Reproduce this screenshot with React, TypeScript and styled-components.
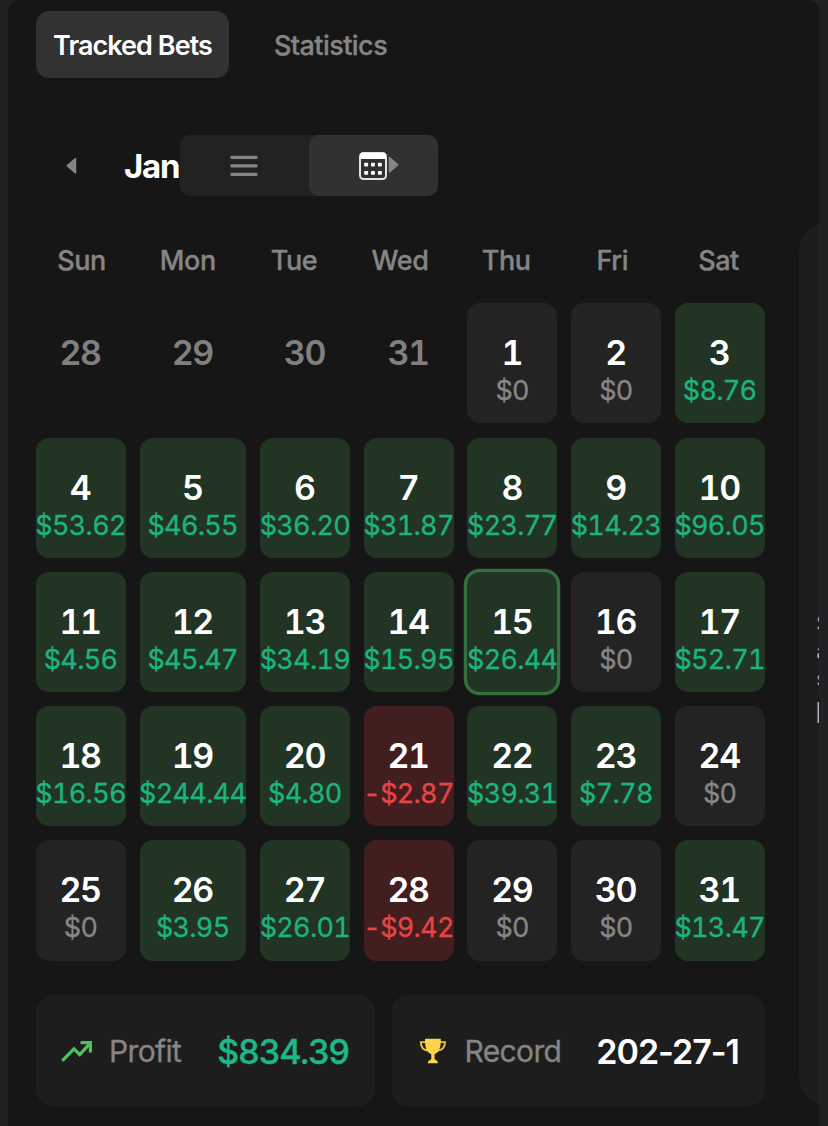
import React from "react";
import styled, { createGlobalStyle } from "styled-components";

const GlobalStyle = createGlobalStyle`
  * { box-sizing: border-box; }
  html, body { margin: 0; background: #212123; }
  body { font-family: Inter, "Liberation Sans", sans-serif; }
  button { font: inherit; border: 0; padding: 0; background: none; color: inherit; }
`;

const Page = styled.div`
  width: 828px;
  height: 1126px;
  padding: 0 9px 0 8px;
  background: #212123;
  overflow: hidden;
`;

const Panel = styled.main`
  height: 1126px;
  padding: 11px 0 0 28px;
  background: #161616;
  border-radius: 12px 10px 0 0;
  overflow: hidden;
  display: flex;
  gap: 34px;
`;

const Main = styled.div`
  flex: 0 0 729px;
  display: flex;
  flex-direction: column;
`;

const Tabs = styled.nav`
  display: flex;
  height: 67px;
  gap: 27.5px;
`;

const Tab = styled.button<{ $active?: boolean; $width: number }>`
  width: ${(p) => p.$width}px;
  height: 67px;
  padding-top: 2px;
  border-radius: 13px;
  font-size: 27px;
  font-weight: ${(p) => (p.$active ? 600 : 500)};
  letter-spacing: ${(p) => (p.$active ? -0.95 : -0.55)}px;
  -webkit-text-stroke: ${(p) => (p.$active ? 0 : 0.35)}px currentColor;
  white-space: nowrap;
  color: ${(p) => (p.$active ? "#ffffff" : "#858585")};
  background: ${(p) => (p.$active ? "#323232" : "transparent")};
`;

const Toolbar = styled.div`
  display: flex;
  align-items: center;
  height: 61px;
  margin-top: 57px;
`;

const PrevButton = styled.button`
  width: 71px;
  height: 61px;
  display: flex;
  align-items: center;
  justify-content: center;
`;

const MonthName = styled.h2`
  width: 72.5px;
  margin: 0;
  padding: 1px 0 0 17px;
  font-size: 33px;
  line-height: 40px;
  font-weight: 700;
  letter-spacing: -1.2px;
  color: #fff;
`;

const ViewToggle = styled.div`
  position: relative;
  width: 258px;
  height: 61px;
  display: flex;
  border-radius: 10px;
  background: #222222;
`;

const ToggleButton = styled.button<{ $active?: boolean }>`
  flex: 1;
  border-radius: 10px;
  display: flex;
  align-items: center;
  justify-content: center;
  background: ${(p) => (p.$active ? "#313131" : "transparent")};
`;

const NextButton = styled.button`
  position: absolute;
  right: 38.5px;
  top: 21px;
  width: 12px;
  height: 18px;
  display: flex;
`;

const Weekdays = styled.div`
  display: grid;
  grid-template-columns: repeat(7, 1fr);
  column-gap: 14px;
  margin: 48px 0 0;
`;

const Weekday = styled.span`
  height: 34px;
  line-height: 34px;
  padding-right: 0.9px;
  text-align: center;
  font-size: 27px;
  font-weight: 500;
  letter-spacing: -0.45px;
  -webkit-text-stroke: 0.35px currentColor;
  color: #858585;
`;

const Calendar = styled.div`
  display: grid;
  grid-template-columns: 89.9px 106.8px repeat(5, 89.9px);
  grid-auto-rows: 120.2px;
  column-gap: 13.8px;
  row-gap: 14.1px;
  margin-top: 25.3px;
  margin-left: -0.2px;
`;

type Tone = "win" | "loss" | "zero" | "outside";

const cellColor: Record<Tone, string> = {
  win: "#223524",
  loss: "#431e1f",
  zero: "#232323",
  outside: "transparent",
};

const amountColor: Record<Tone, string> = {
  win: "#1db37e",
  loss: "#e84347",
  zero: "#868686",
  outside: "transparent",
};

const Cell = styled.div<{ $tone: Tone; $today?: boolean }>`
  display: flex;
  flex-direction: column;
  align-items: center;
  padding-top: 29px;
  border-radius: 13px;
  background: ${(p) => cellColor[p.$tone]};
  box-shadow: ${(p) => (p.$today ? "0 0 0 3.3px #34703c" : "none")};
  font-feature-settings: "tnum";
`;

const DayNumber = styled.span<{ $muted?: boolean }>`
  font-size: 34px;
  line-height: 41px;
  font-weight: 600;
  letter-spacing: -1.4px;
  margin-right: 1.3px;
  color: ${(p) => (p.$muted ? "#808080" : "#fff")};
`;

const Amount = styled.span<{ $tone: Tone }>`
  font-size: 27px;
  line-height: 34px;
  margin-top: 1px;
  letter-spacing: -0.7px;
  margin-right: 0.4px;
  -webkit-text-stroke: 0.3px currentColor;
  white-space: nowrap;
  color: ${(p) => amountColor[p.$tone]};
`;

const Summary = styled.footer`
  display: grid;
  grid-template-columns: 339px 373px;
  column-gap: 17px;
  margin-top: 34px;
`;

const StatCard = styled.section`
  height: 111px;
  display: flex;
  align-items: center;
  padding: 2px 26px 0 25px;
  border-radius: 16px;
  background: #1d1d1d;
`;

const StatLabel = styled.span<{ $gap: number }>`
  margin-left: ${(p) => p.$gap}px;
  font-size: 30px;
  letter-spacing: -0.65px;
  -webkit-text-stroke: 0.3px currentColor;
  color: #858585;
`;

const StatValue = styled.span<{ $positive?: boolean }>`
  margin-left: auto;
  font-size: 34px;
  font-weight: ${(p) => (p.$positive ? 500 : 600)};
  letter-spacing: ${(p) => (p.$positive ? -0.9 : -1)}px;
  -webkit-text-stroke: ${(p) => (p.$positive ? 0.4 : 0)}px currentColor;
  white-space: nowrap;
  color: ${(p) => (p.$positive ? "#1db886" : "#fff")};
`;

const SideCard = styled.aside`
  flex: 0 0 300px;
  height: 882px;
  margin-top: 212px;
  padding: 387px 0 0 17.3px;
  border-radius: 28px;
  background: #1d1d1d;
  color: #fff;
`;

const SideLine = styled.p`
  margin: 0;
  font-size: 22px;
  line-height: 27.5px;
  opacity: 0.65;
`;

const SideTitle = styled.p`
  margin: 2px 0 0 -1.3px;
  font-size: 29px;
  line-height: 35px;
  opacity: 0.65;
`;

type Day = [number, string?];

const days: Day[] = [
  [28], [29], [30], [31], [1, "$0"], [2, "$0"], [3, "$8.76"],
  [4, "$53.62"], [5, "$46.55"], [6, "$36.20"], [7, "$31.87"], [8, "$23.77"], [9, "$14.23"], [10, "$96.05"],
  [11, "$4.56"], [12, "$45.47"], [13, "$34.19"], [14, "$15.95"], [15, "$26.44"], [16, "$0"], [17, "$52.71"],
  [18, "$16.56"], [19, "$244.44"], [20, "$4.80"], [21, "-$2.87"], [22, "$39.31"], [23, "$7.78"], [24, "$0"],
  [25, "$0"], [26, "$3.95"], [27, "$26.01"], [28, "-$9.42"], [29, "$0"], [30, "$0"], [31, "$13.47"],
];

const toneOf = (amount?: string): Tone => {
  if (!amount) return "outside";
  if (amount === "$0") return "zero";
  return amount.startsWith("-") ? "loss" : "win";
};

const ListIcon = () => (
  <svg width="28" height="22" viewBox="0 0 28 22" stroke="#858585" strokeWidth="3.2" strokeLinecap="round">
    <path d="M1.8 2.3H26.2M1.8 10.8H26.2M1.8 19.3H26.2" />
  </svg>
);

const CalendarIcon = () => (
  <svg width="28" height="28" viewBox="0 0 28 28">
    <rect x="1" y="1" width="26" height="26" rx="3.5" fill="none" stroke="#e2e2e2" strokeWidth="2" />
    <path d="M1 7V4.5Q1 1 4.5 1H23.5Q27 1 27 4.5V7Z" fill="#fff" />
    {[5.2, 12, 18.9].map((x) =>
      [10.7, 19.1].map((y) => <rect key={`${x}-${y}`} x={x} y={y} width="3.9" height="3.7" rx=".7" fill="#fff" />)
    )}
  </svg>
);

const TrendIcon = () => (
  <svg width="32" height="22" viewBox="0 0 32 22" fill="none" stroke="#4fc15b" strokeWidth="3.2" strokeLinecap="round">
    <path d="M2.2 19.8L13 8.8L18.7 14.6L28.6 3.8" strokeLinejoin="miter" />
    <path d="M20.8 2.7H29.4V11.2" />
  </svg>
);

const TrophyIcon = () => (
  <svg width="30" height="26" viewBox="-2 0 30 26">
    <path
      d="M7 4.1H1.8C1.8 9.4 4.4 12.4 9.5 12.9M20.5 4.1H26C26 9.4 23.2 12.4 18 12.9"
      fill="none"
      stroke="#edc43c"
      strokeWidth="1.9"
    />
    <path
      d="M6 .7H21.8V3.2C21.8 10.3 19.5 14.4 15.6 16.2V20.9C16.2 22.2 19 22 19 25.2H8.8C8.8 22 11.7 22.2 12.3 20.9V16.2C8.3 14.4 6 10.3 6 3.2Z"
      fill="#fcd34b"
    />
  </svg>
);

export default function App() {
  return (
    <Page>
      <GlobalStyle />
      <Panel>
        <Main>
          <Tabs>
            <Tab $active $width={193}>Tracked Bets</Tab>
            <Tab $width={148}>Statistics</Tab>
          </Tabs>
          <Toolbar>
            <PrevButton aria-label="Previous month">
              <svg width="11" height="18" viewBox="0 0 11 18">
                <path d="M9.5 1.5V16L1.2 8.8Z" fill="#858585" stroke="#858585" strokeWidth="1.5" strokeLinejoin="round" />
              </svg>
            </PrevButton>
            <MonthName>Jan</MonthName>
            <ViewToggle>
              <ToggleButton aria-label="List view"><ListIcon /></ToggleButton>
              <ToggleButton $active aria-label="Calendar view"><CalendarIcon /></ToggleButton>
              <NextButton aria-label="Next month">
                <svg width="12" height="18" viewBox="0 0 12 18">
                  <path d="M2.5 1.5V16L10.8 8.8Z" fill="#858585" stroke="#858585" strokeWidth="1.5" strokeLinejoin="round" />
                </svg>
              </NextButton>
            </ViewToggle>
          </Toolbar>
          <Weekdays>
            {["Sun", "Mon", "Tue", "Wed", "Thu", "Fri", "Sat"].map((name) => (
              <Weekday key={name}>{name}</Weekday>
            ))}
          </Weekdays>
          <Calendar>
            {days.map(([day, amount], i) => {
              const tone = toneOf(amount);
              return (
                <Cell key={i} $tone={tone} $today={day === 15}>
                  <DayNumber $muted={!amount}>{day}</DayNumber>
                  {amount && <Amount $tone={tone}>{amount}</Amount>}
                </Cell>
              );
            })}
          </Calendar>
          <Summary>
            <StatCard>
              <TrendIcon />
              <StatLabel $gap={16}>Profit</StatLabel>
              <StatValue $positive>$834.39</StatValue>
            </StatCard>
            <StatCard>
              <TrophyIcon />
              <StatLabel $gap={17.5}>Record</StatLabel>
              <StatValue>202-27-1</StatValue>
            </StatCard>
          </Summary>
        </Main>
        <SideCard>
          <SideLine>S</SideLine>
          <SideLine>a</SideLine>
          <SideLine>s</SideLine>
          <SideTitle>E</SideTitle>
        </SideCard>
      </Panel>
    </Page>
  );
}
